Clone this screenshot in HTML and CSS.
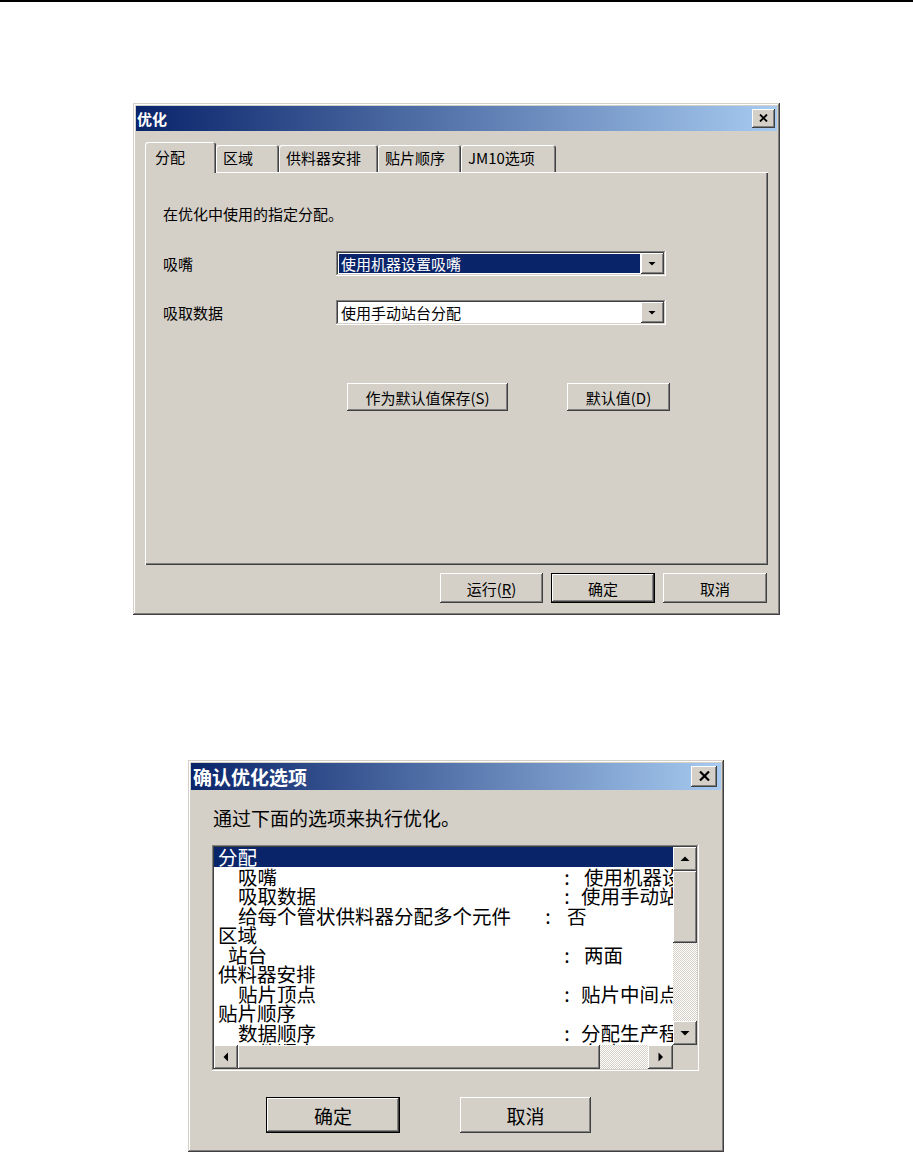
FILE: index.html
```html
<!DOCTYPE html>
<html lang="zh-CN">
<head>
    <meta charset="UTF-8">
    <meta name="viewport" content="width=device-width, initial-scale=1.0">
    <title>优化</title>
    <link rel="stylesheet" href="styles.css">
</head>
<body>
    <div class="page-rule"></div>

    <div class="window win-optimize">
        <div class="titlebar">
            <span class="title">优化</span>
            <button class="btn close-btn" type="button" aria-label="关闭">
                <svg width="9" height="8" viewBox="0 0 9 8"><path d="M1 0.5 L8 7.5 M8 0.5 L1 7.5" stroke="#000" stroke-width="1.8"/></svg>
            </button>
        </div>
        <div class="win-body">
            <div class="tabs">
                <div class="tab tab-alloc active">分配</div>
                <div class="tab tab-area">区域</div>
                <div class="tab tab-feeder">供料器安排</div>
                <div class="tab tab-order">贴片顺序</div>
                <div class="tab tab-jm">JM10选项</div>
            </div>
            <div class="panel">
                <div class="intro">在优化中使用的指定分配。</div>
                <div class="field field-first">
                    <label>吸嘴</label>
                    <div class="combo">
                        <span class="combo-text selected">使用机器设置吸嘴</span>
                        <span class="btn combo-btn">
                            <svg width="23" height="21" viewBox="0 0 23 21"><polygon points="7.5,9 14.5,9 11,12.5" fill="#000"/></svg>
                        </span>
                    </div>
                </div>
                <div class="field">
                    <label>吸取数据</label>
                    <div class="combo">
                        <span class="combo-text">使用手动站台分配</span>
                        <span class="btn combo-btn">
                            <svg width="23" height="21" viewBox="0 0 23 21"><polygon points="7.5,9 14.5,9 11,12.5" fill="#000"/></svg>
                        </span>
                    </div>
                </div>
                <div class="panel-actions">
                    <button class="btn btn-save" type="button">作为默认值保存(S)</button>
                    <button class="btn btn-reset" type="button">默认值(D)</button>
                </div>
            </div>
            <div class="footer">
                <button class="btn btn-foot" type="button">运行(<u>R</u>)</button>
                <button class="btn btn-foot default" type="button">确定</button>
                <button class="btn btn-foot" type="button">取消</button>
            </div>
        </div>
    </div>

    <div class="window win-confirm">
        <div class="titlebar">
            <span class="title">确认优化选项</span>
            <button class="btn close-btn" type="button" aria-label="关闭">
                <svg width="11" height="10" viewBox="0 0 11 10"><path d="M1 0.5 L10 9.5 M10 0.5 L1 9.5" stroke="#000" stroke-width="2.2"/></svg>
            </button>
        </div>
        <div class="confirm-body">
            <div class="confirm-text">通过下面的选项来执行优化。</div>
            <div class="listbox">
                <div class="list-view">
                    <div class="list-row selected">分配</div>
                    <div class="list-row sub"><span class="key">吸嘴</span><span class="sep">:</span><span class="val wide">使用机器设置吸嘴</span></div>
                    <div class="list-row sub"><span class="key">吸取数据</span><span class="sep">:</span><span class="val">使用手动站台分配</span></div>
                    <div class="list-row sub tight"><span class="key">给每个管状供料器分配多个元件</span><span class="sep">:</span><span class="val">否</span></div>
                    <div class="list-row">区域</div>
                    <div class="list-row sub half"><span class="key">站台</span><span class="sep">:</span><span class="val wide">两面</span></div>
                    <div class="list-row">供料器安排</div>
                    <div class="list-row sub"><span class="key">贴片顶点</span><span class="sep">:</span><span class="val">贴片中间点</span></div>
                    <div class="list-row">贴片顺序</div>
                    <div class="list-row sub"><span class="key">数据顺序</span><span class="sep">:</span><span class="val">分配生产程序</span></div>
                    <div class="list-row sub"><span class="key">元件顺序</span><span class="sep">:</span><span class="val">自动</span></div>
                </div>
                <div class="vscroll">
                    <span class="btn sb-btn">
                        <svg width="24" height="24" viewBox="0 0 24 24"><polygon points="7.5,14 16.5,14 12,9.5" fill="#000"/></svg>
                    </span>
                    <span class="btn v-thumb"></span>
                    <span class="track"></span>
                    <span class="btn sb-btn">
                        <svg width="24" height="24" viewBox="0 0 24 24"><polygon points="7.5,10 16.5,10 12,14.5" fill="#000"/></svg>
                    </span>
                </div>
                <div class="hscroll">
                    <span class="btn sb-btn">
                        <svg width="24" height="24" viewBox="0 0 24 24"><polygon points="14,7.5 14,16.5 9.5,12" fill="#000"/></svg>
                    </span>
                    <span class="btn h-thumb"></span>
                    <span class="track"></span>
                    <span class="btn sb-btn sb-right">
                        <svg width="25" height="24" viewBox="0 0 25 24"><polygon points="10.5,7.5 10.5,16.5 15,12" fill="#000"/></svg>
                    </span>
                </div>
                <div class="corner"></div>
            </div>
            <div class="confirm-actions">
                <button class="btn btn-ok default" type="button">确定</button>
                <button class="btn btn-cancel" type="button">取消</button>
            </div>
        </div>
    </div>
</body>
</html>
```

FILE: styles.css
```css
* {
    box-sizing: border-box;
}
body {
    margin: 0;
    background: #fff;
    color: #000;
    font-family: "Noto Sans CJK SC", "Noto Sans", sans-serif;
}
.page-rule {
    height: 2px;
    background: #000;
}

/* windows */
.window {
    display: flex;
    flex-direction: column;
    padding: 3px;
    background: #d4d0c8;
    box-shadow: inset -1px -1px #404040, inset 1px 1px #d4d0c8, inset -2px -2px #808080, inset 2px 2px #fff;
}
.win-optimize {
    width: 647px;
    height: 512px;
    margin: 101px 0 0 133px;
    font-size: 15px;
}
.win-confirm {
    width: 536px;
    height: 392px;
    margin: 145px 0 0 188px;
    font-size: 19px;
}
.titlebar {
    display: flex;
    align-items: center;
    justify-content: space-between;
    flex-shrink: 0;
    background: linear-gradient(90deg, #0a246a, #a6caf0);
    color: #fff;
    font-weight: bold;
}
.win-optimize .titlebar {
    height: 25px;
    padding: 0 2px 0 1px;
}
.win-confirm .titlebar {
    height: 27px;
    padding: 0 4px 0 2px;
}

/* buttons */
.btn {
    display: flex;
    align-items: center;
    justify-content: center;
    padding: 0;
    border: none;
    background: #d4d0c8;
    color: #000;
    font: inherit;
    box-shadow: inset -1px -1px #404040, inset 1px 1px #fff, inset -2px -2px #808080, inset 2px 2px #d4d0c8;
}
.btn.default {
    border: 1px solid #000;
    box-shadow: inset -1px -1px #404040, inset 1px 1px #fff, inset -2px -2px #808080;
}
.btn u {
    text-underline-offset: 2px;
}
.win-optimize .close-btn {
    width: 23px;
    height: 19px;
    padding-bottom: 1px;
}
.win-confirm .close-btn {
    width: 26px;
    height: 21px;
    padding-bottom: 1px;
}

/* tabbed dialog */
.win-body {
    display: flex;
    flex-direction: column;
    flex: 1;
    padding: 11px 9px 9px 9px;
}
.tabs {
    display: flex;
    align-items: flex-end;
    height: 30px;
}
.tab {
    display: flex;
    align-items: center;
    height: 27px;
    padding: 0 0 2px 7px;
    border-radius: 3px 3px 0 0;
    box-shadow: inset 1px 1px #fff, inset -1px 0 #404040, inset -2px 0 #808080;
}
.tab.active {
    position: relative;
    z-index: 1;
    height: 31px;
    margin-bottom: -1px;
    padding-left: 10px;
    background: #d4d0c8;
    box-shadow: inset 1px 1px #fff, inset -1px 0 #404040, inset -2px 0 #808080;
}
.tab-alloc { width: 71px; }
.tab-area { width: 63px; }
.tab-feeder { width: 99px; }
.tab-order { width: 83px; }
.tab-jm { width: 95px; }

.panel {
    height: 393px;
    padding: 33px 0 0 18px;
    box-shadow: inset 1px 1px #fff, inset -1px -1px #404040, inset -2px -2px #808080;
}
.intro {
    height: 17px;
    line-height: 17px;
}
.field {
    display: flex;
    align-items: center;
    height: 25px;
    margin-top: 24px;
}
.field-first {
    margin-top: 29px;
}
.field label {
    width: 173px;
}
.combo {
    display: flex;
    width: 330px;
    height: 25px;
    padding: 2px;
    background: #fff;
    box-shadow: inset -1px -1px #fff, inset 1px 1px #808080, inset -2px -2px #d4d0c8, inset 2px 2px #404040;
}
.combo-text {
    flex: 1;
    margin: 1px 1px 1px 1px;
    padding-left: 2px;
    line-height: 19px;
    white-space: nowrap;
}
.combo-text.selected {
    background: #0a246a;
    color: #fff;
}
.combo-btn {
    width: 23px;
    height: 21px;
}
.panel-actions {
    display: flex;
    gap: 59px;
    margin: 58px 0 0 184px;
}
.btn-save {
    width: 161px;
    height: 28px;
}
.btn-reset {
    width: 103px;
    height: 28px;
}
.footer {
    display: flex;
    justify-content: flex-end;
    gap: 8px;
    margin-top: 8px;
    padding-right: 1px;
}
.btn-foot {
    width: 104px;
    height: 30px;
}
.btn-foot:first-child {
    width: 103px;
}

/* confirm dialog */
.confirm-body {
    display: flex;
    flex-direction: column;
    flex: 1;
    padding-left: 21px;
}
.confirm-text {
    height: 22px;
    line-height: 22px;
    margin: 17px 0 0 1px;
}
.listbox {
    display: grid;
    grid-template-columns: 459px 24px;
    grid-template-rows: 198px 24px;
    width: 487px;
    height: 226px;
    margin-top: 16px;
    padding: 2px;
    background: #fff;
    box-shadow: inset -1px -1px #fff, inset 1px 1px #808080, inset -2px -2px #d4d0c8, inset 2px 2px #404040;
}
.list-view {
    overflow: hidden;
    font-size: 19.5px;
}
.list-row {
    display: flex;
    height: 19.5px;
    line-height: 19.5px;
    padding-left: 4px;
    white-space: nowrap;
}
.list-row.selected {
    background: #0a246a;
    color: #fff;
}
.key {
    flex-shrink: 0;
    width: 340px;
    padding-left: 20px;
}
.half .key {
    padding-left: 10px;
}
.tight .key {
    width: 321px;
}
.sep {
    flex-shrink: 0;
    width: 18px;
    text-align: center;
}
.val {
    padding-left: 5px;
}
.val.wide {
    padding-left: 8px;
}
.tight .val {
    padding-left: 10px;
}
.vscroll {
    display: flex;
    flex-direction: column;
}
.hscroll {
    display: flex;
}
.sb-btn {
    flex-shrink: 0;
    width: 24px;
    height: 24px;
}
.sb-right {
    width: 25px;
}
.v-thumb {
    height: 72px;
}
.h-thumb {
    width: 362px;
}
.track {
    flex: 1;
    background: repeating-conic-gradient(#fff 0 25%, #d4d0c8 0 50%) 0 0 / 2px 2px;
}
.corner {
    background: #d4d0c8;
}
.confirm-actions {
    display: flex;
    gap: 60px;
    margin: 26px 0 0 54px;
}
.btn-ok {
    width: 134px;
    height: 36px;
}
.btn-cancel {
    width: 131px;
    height: 36px;
}
```
